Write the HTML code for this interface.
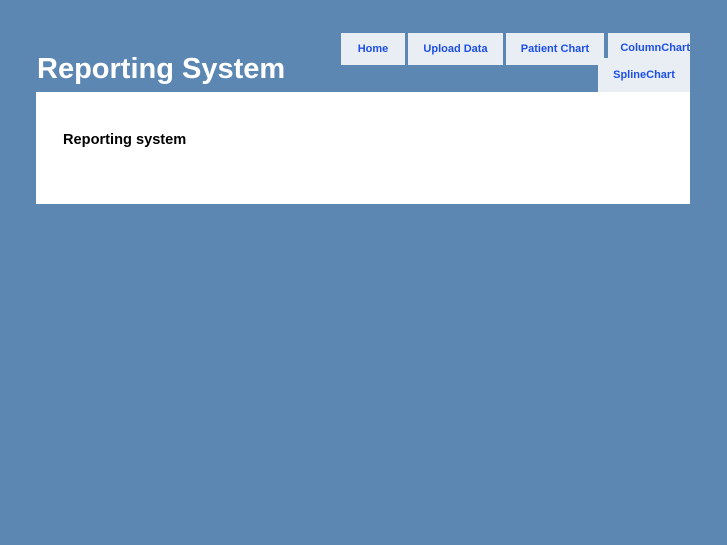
<!DOCTYPE html>
<html><head><style>
body{margin:0;background:#5c87b2;width:727px;height:545px;position:relative;font-family:"Liberation Sans",sans-serif;overflow:hidden}
h1{position:absolute;left:37px;top:51px;margin:0;color:#fff;font-size:29px;font-weight:bold;line-height:36px}
.t{position:absolute;background:#e8eef4;color:#1d4fe8;font-size:11px;font-weight:bold;text-align:center;line-height:32px;height:32px}
.main{position:absolute;left:36px;top:92px;width:654px;height:112px;background:#fff}
.main p{position:absolute;left:27px;top:40px;margin:0;font-size:14.6px;font-weight:bold;color:#000}
</style></head><body>
<h1>Reporting System</h1>
<div class="t" style="left:341px;top:33px;width:64px">Home</div>
<div class="t" style="left:408px;top:33px;width:95px">Upload Data</div>
<div class="t" style="left:506px;top:33px;width:98px">Patient Chart</div>
<div class="t" style="left:608px;top:33px;width:82px;height:26px;line-height:31px;text-align:right;overflow:hidden;white-space:nowrap">ColumnChart</div>
<div class="t" style="left:598px;top:58px;width:92px;height:34px;line-height:34px">SplineChart</div>
<div class="main"><p>Reporting system</p></div>
</body></html>
